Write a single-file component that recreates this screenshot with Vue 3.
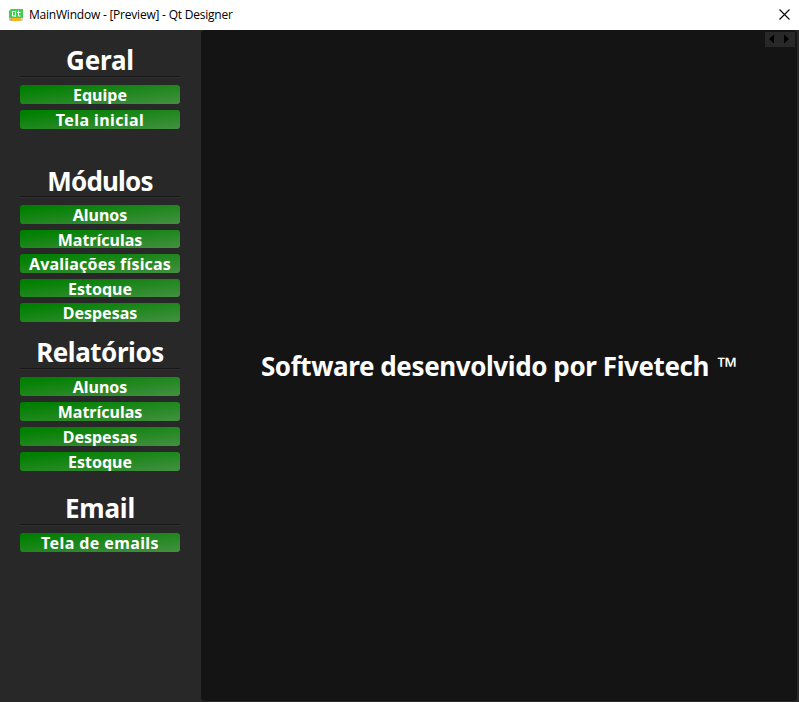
<script setup>
const groups = [
  { title: 'Geral', cls: 'geral', items: ['Equipe', 'Tela inicial'] },
  { title: 'Módulos', cls: 'modulos', items: ['Alunos', 'Matrículas', 'Avaliações físicas', 'Estoque', 'Despesas'] },
  { title: 'Relatórios', cls: 'relatorios', items: ['Alunos', 'Matrículas', 'Despesas', 'Estoque'] },
  { title: 'Email', cls: 'email', items: ['Tela de emails'] },
]
const wide = (label) => label.startsWith('Tela')
const medium = (label) => label.startsWith('Avalia')
</script>

<template>
  <div class="window">
    <header class="titlebar">
      <svg class="logo" width="14" height="13" viewBox="0 0 14 13">
        <path d="M2 0H14V9L12 11H0V2Z" fill="#41cd52" />
        <path d="M0 9H14V12H0Z" fill="#d8d8d0" />
        <path d="M3 9H11L13 10.5L11 12H3Z" fill="#f6b51b" />
        <path d="M0 10.5L3 9V12Z" fill="#e88b72" />
        <path d="M3.5 2.5H6.5V7H3.5ZM5.5 6L7 8M9.5 1.5V7H11.5M8 3.5H11.5" fill="none" stroke="#fff" stroke-width="1" />
      </svg>
      <span class="caption">MainWindow - [Preview] - Qt Designer</span>
      <svg class="close" width="11" height="11" viewBox="0 0 11 11">
        <path d="M.5 .5L10.5 10.5M10.5 .5L.5 10.5" stroke="#000" stroke-width="1.1" />
      </svg>
    </header>
    <div class="body">
      <nav class="sidebar">
        <section v-for="g in groups" :key="g.title" :class="['group', g.cls]">
          <h2>{{ g.title }}</h2>
          <div class="buttons">
            <button v-for="i in g.items" :key="i" :class="{ wide: wide(i), medium: medium(i) }">{{ i }}</button>
          </div>
        </section>
      </nav>
      <main class="page">
        <div class="pager">
          <svg width="30" height="15" viewBox="0 0 30 15">
            <path d="M9 2.5V11.5L4 7ZM19 2.5V11.5L24 7Z" fill="#000" />
          </svg>
        </div>
        <p class="credit">Software desenvolvido por Fivetech <span class="tm">™</span></p>
      </main>
    </div>
  </div>
</template>

<style>
body { margin: 0; }
</style>

<style scoped>
.window { width: 799px; height: 702px; display: flex; flex-direction: column; background: #282828; overflow: hidden; font-family: "Noto Sans", sans-serif; }
.titlebar { height: 30px; flex: none; box-sizing: border-box; display: flex; align-items: center; padding: 0 9px; background: #fff; color: #000; }
.logo { margin-top: 1px; }
.caption { margin-left: 6px; font: 12px/30px "Open Sans", sans-serif; letter-spacing: -0.22px; white-space: nowrap; }
.close { margin-left: auto; margin-top: -1px; }
.body { flex: 1; display: flex; min-height: 0; }
.sidebar { width: 160px; flex: none; padding: 14px 21px 0 20px; }
.group { display: flex; flex-direction: column; }
h2 { margin: 0 0 8px; height: 33px; box-sizing: border-box; border-bottom: 1px solid #171717; box-shadow: 0 1px #2f2f2f; color: #fff; font-size: 26px; line-height: 33px; font-weight: 700; letter-spacing: -0.2px; text-align: center; white-space: nowrap; }
.buttons { display: grid; grid-auto-rows: 19px; row-gap: 6px; }
.modulos { margin-top: 35px; }
.modulos h2 { line-height: 34px; letter-spacing: -0.8px; }
.modulos .buttons { grid-template-rows: 19px 18px 19px 18px 19px; }
.relatorios { margin-top: 14px; }
.relatorios h2 { letter-spacing: -0.45px; }
.email { margin-top: 21px; }
button { padding: 0; border: 0; border-radius: 3px; overflow: hidden; display: flex; justify-content: center; background: linear-gradient(to bottom right, #008000 10%, #449041); color: #fff; font: 700 16px/20px "Noto Sans", sans-serif; white-space: nowrap; }
.wide { letter-spacing: 0.4px; }
.medium { letter-spacing: 0.2px; }
.page { flex: 1; position: relative; margin: 0 2px 1px 0; border-radius: 4px; background: #141414; display: flex; align-items: center; justify-content: center; }
.pager { position: absolute; top: 2px; right: 2px; width: 30px; height: 15px; background: #282828; }
.pager svg { display: block; }
.credit { margin: 0; color: #fff; font-size: 26px; line-height: 32px; font-weight: 700; letter-spacing: -0.41px; white-space: nowrap; }
.tm { margin-left: 2px; font-weight: 600; font-size: 26px; line-height: 1; }
</style>
